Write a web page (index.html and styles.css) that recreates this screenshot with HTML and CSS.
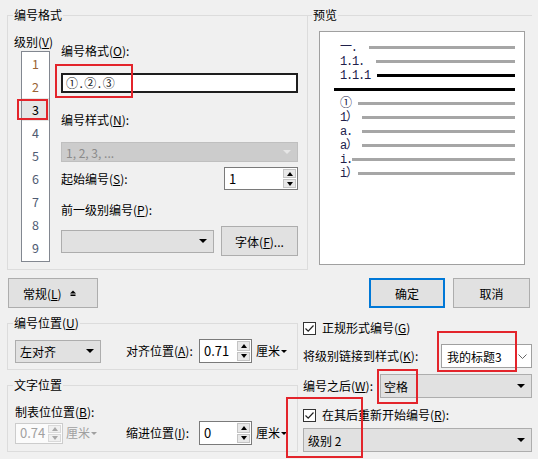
FILE: index.html
```html
<!DOCTYPE html>
<html>
<head>
<meta charset="utf-8">
<link rel="stylesheet" href="styles.css">
</head>
<body>
<div class="dlg">
  <div class="top">
    <div class="group g-fmt">
      <div class="gtitle">编号格式</div>
      <div class="fmt-body">
        <div class="levels">
          <div class="lbl l-lvl">级别(<u>V</u>)</div>
          <div class="lvlbox">
            <div class="lvl lv-a">1</div>
            <div class="lvl lv-a">2</div>
            <div class="lvl sel">3</div>
            <div class="lvl lv-b">4</div>
            <div class="lvl lv-b">5</div>
            <div class="lvl lv-b">6</div>
            <div class="lvl lv-b">7</div>
            <div class="lvl lv-b">8</div>
            <div class="lvl lv-b">9</div>
          </div>
        </div>
        <div class="fields">
          <div class="lbl l-fmt">编号格式(<u>O</u>):</div>
          <div class="fmtinput">①.②.③</div>
          <div class="lbl l-style">编号样式(<u>N</u>):</div>
          <div class="combo disabled c-style"><span>1, 2, 3, ...</span><i class="arr"></i></div>
          <div class="row r-start">
            <span class="lbl">起始编号(<u>S</u>):</span>
            <div class="spin s-start"><span class="val">1</span><div class="spinbtns"><b class="sb"><i class="up"></i></b><b class="sb"><i class="dn"></i></b></div></div>
          </div>
          <div class="lbl l-prev">前一级别编号(<u>P</u>):</div>
          <div class="row r-prev">
            <div class="combo c-prev"><span></span><i class="arr"></i></div>
            <div class="btn b-font">字体(<u>F</u>)...</div>
          </div>
        </div>
      </div>
    </div>
    <div class="group g-prev">
      <div class="gtitle">预览</div>
      <div class="pv">
        <div class="pr"><span class="pt w29">一.</span><span class="bar"></span></div>
        <div class="pr"><span class="pt w36">1.1.</span><span class="bar"></span></div>
        <div class="pr"><span class="pt w37">1.1.1</span><span class="bar blk"></span></div>
        <div class="pr full"><span class="bar blk"></span></div>
        <div class="pr"><span class="pt w18">①</span><span class="bar"></span></div>
        <div class="pr"><span class="pt w22">1）</span><span class="bar"></span></div>
        <div class="pr"><span class="pt w22">a.</span><span class="bar"></span></div>
        <div class="pr"><span class="pt w22">a）</span><span class="bar"></span></div>
        <div class="pr"><span class="pt w12">i.</span><span class="bar"></span></div>
        <div class="pr"><span class="pt w18">i）</span><span class="bar"></span></div>
      </div>
    </div>
  </div>

  <div class="btnrow">
    <div class="btn b-gen">常规(<u>L</u>)<svg class="ico" width="6" height="7" viewBox="0 0 6 7"><polygon points="0,3.5 3,0.5 6,3.5" fill="#000"/><rect x="0.5" y="4.5" width="5" height="1.5" fill="#000"/></svg></div>
    <div class="btn b-ok">确定</div>
    <div class="btn b-cancel">取消</div>
  </div>

  <div class="bottom">
    <div class="bl">
      <div class="group g-pos">
        <div class="gtitle">编号位置(<u>U</u>)</div>
        <div class="grow r-pos">
          <div class="lead"><div class="combo c-align"><span>左对齐</span><i class="arr"></i></div></div>
          <span class="lbl l-w">对齐位置(<u>A</u>):</span>
          <div class="spin s-small"><span class="val">0.71</span><div class="spinbtns"><b class="sb"><i class="up"></i></b><b class="sb"><i class="dn"></i></b></div></div>
          <span class="unit">厘米<i class="tri"></i></span>
        </div>
      </div>
      <div class="group g-text">
        <div class="gtitle">文字位置</div>
        <div class="lbl l-tab">制表位位置(<u>B</u>):</div>
        <div class="grow r-text">
          <div class="lead">
            <div class="spin s-dis"><span class="val">0.74</span><div class="spinbtns"><b class="sb"><i class="up"></i></b><b class="sb"><i class="dn"></i></b></div></div>
            <span class="unit dis">厘米<i class="tri"></i></span>
          </div>
          <span class="lbl l-w">缩进位置(<u>I</u>):</span>
          <div class="spin s-small"><span class="val">0</span><div class="spinbtns"><b class="sb"><i class="up"></i></b><b class="sb"><i class="dn"></i></b></div></div>
          <span class="unit">厘米<i class="tri"></i></span>
        </div>
      </div>
    </div>
    <div class="br">
      <div class="chkrow r-legal">
        <span class="chk"><svg width="11" height="11" viewBox="0 0 11 11"><polyline points="1.5,5.5 4.2,8.2 9.5,2.5" fill="none" stroke="#222" stroke-width="1.2"/></svg></span>
        <span class="lbl">正规形式编号(<u>G</u>)</span>
      </div>
      <div class="row r-link">
        <span class="lbl">将级别链接到样式(<u>K</u>):</span>
        <div class="combo c-link"><span>我的标题3</span><svg class="chev" width="9" height="5" viewBox="0 0 9 5"><polyline points="0.5,0.5 4.5,4.5 8.5,0.5" fill="none" stroke="#666" stroke-width="1"/></svg></div>
      </div>
      <div class="row r-after">
        <span class="lbl">编号之后(<u>W</u>):</span>
        <div class="combo c-after"><span>空格</span><i class="arr"></i></div>
      </div>
      <div class="chkrow r-restart">
        <span class="chk"><svg width="11" height="11" viewBox="0 0 11 11"><polyline points="1.5,5.5 4.2,8.2 9.5,2.5" fill="none" stroke="#222" stroke-width="1.2"/></svg></span>
        <span class="lbl">在其后重新开始编号(<u>R</u>):</span>
      </div>
      <div class="combo c-lvl"><span>级别 2</span><i class="arr"></i></div>
    </div>
  </div>

  <div class="mark m1"></div>
  <div class="mark m2"></div>
  <div class="mark m3"></div>
  <div class="mark m4"></div>
  <div class="mark m5"></div>
</div>
</body>
</html>
```

FILE: styles.css
```css
html, body {
  margin: 0;
  padding: 0;
  background: #f0f0f0;
}
body {
  font-family: "Noto Sans CJK SC", "Microsoft YaHei", sans-serif;
  font-size: 12px;
  color: #000;
}
u { text-underline-offset: 1px; }

.dlg {
  position: relative;
  width: 538px;
  height: 459px;
  overflow: hidden;
}

.lbl {
  line-height: 16px;
  white-space: nowrap;
}

/* group boxes */
.group {
  box-sizing: border-box;
  border: 1px solid #dcdcdc;
}
.gtitle {
  width: max-content;
  height: 16px;
  line-height: 16px;
  margin: -9px 0 0 5px;
  padding: 0 1px;
  background: #f0f0f0;
  white-space: nowrap;
}

.top {
  display: flex;
  padding: 15px 0 0 7px;
}
.g-fmt {
  width: 301px;
  height: 255px;
  flex: none;
}
.g-prev {
  width: 225px;
  height: 255px;
  margin-left: -1px;
  flex: none;
  border-width: 1px 0 0 0;
}

.fmt-body {
  display: flex;
}
.levels {
  flex: none;
  width: 36px;
  margin-left: 6px;
}
.l-lvl { margin-top: 11px; }
.lvlbox {
  box-sizing: border-box;
  width: 29px;
  height: 211px;
  margin: 1px 0 0 7px;
  border: 1px solid #828790;
  background: #fff;
}
.lvl {
  height: 23px;
  line-height: 23px;
  text-align: center;
  font-size: 12.5px;
}
.lv-a { color: #9a6436; }
.lv-b { color: #4e5a72; }
.lvl.sel {
  background: #e5e5e5;
  color: #000;
}

.fields {
  flex: none;
  width: 237px;
  margin-left: 11px;
}
.l-fmt { margin-top: 20px; }
.fmtinput {
  box-sizing: border-box;
  height: 20px;
  margin-top: 14px;
  border: 2px solid #1e1e1e;
  background: #fff;
  padding-left: 3px;
  line-height: 16px;
  letter-spacing: 1.5px;
  color: #1a1a1a;
}
.l-style { margin-top: 19px; }

.combo {
  box-sizing: border-box;
  display: flex;
  align-items: center;
  border: 1px solid #adadad;
  background: #e1e1e1;
  padding-left: 4px;
  white-space: nowrap;
}
.combo .arr {
  margin-left: auto;
  margin-right: 6px;
  width: 0;
  height: 0;
  border-left: 4px solid transparent;
  border-right: 4px solid transparent;
  border-top: 4px solid #000;
}
.combo.disabled {
  background: #cccccc;
  border-color: #bfbfbf;
  color: #8a8a8a;
}
.combo.disabled .arr { border-top-color: #e6e6e6; }
.c-style {
  height: 20px;
  margin-top: 14px;
}

.row {
  display: flex;
  align-items: center;
  justify-content: space-between;
}
.r-start {
  height: 23px;
  margin-top: 5px;
}
.l-prev { margin-top: 12px; }
.r-prev {
  height: 30px;
  margin-top: 8px;
  justify-content: flex-start;
}
.c-prev {
  width: 153px;
  height: 23px;
}

.btn {
  box-sizing: border-box;
  display: flex;
  align-items: center;
  justify-content: center;
  border: 1px solid #adadad;
  background: #e1e1e1;
  white-space: nowrap;
}
.b-font {
  width: 77px;
  height: 30px;
  margin-left: 7px;
}

/* spinner */
.spin {
  box-sizing: border-box;
  display: flex;
  align-items: stretch;
  border: 1px solid #7a7a7a;
  background: #fff;
}
.spin .val {
  flex: 1;
  align-self: center;
  padding-left: 4px;
  line-height: 16px;
  font-size: 13px;
}
.spinbtns {
  width: 13px;
  margin: 1px;
  display: flex;
  flex-direction: column;
  gap: 1px;
}
.sb {
  flex: 1;
  box-sizing: border-box;
  border: 1px solid #c4c4c4;
  background: #e8e8e8;
  display: flex;
  align-items: center;
  justify-content: center;
}
.sb i {
  width: 0;
  height: 0;
  border-left: 3px solid transparent;
  border-right: 3px solid transparent;
}
.sb .up { border-bottom: 4px solid #000; }
.sb .dn { border-top: 4px solid #000; }
.s-start {
  width: 74px;
  height: 23px;
}
.s-small {
  width: 53px;
  height: 24px;
}
.s-dis {
  width: 48px;
  height: 21px;
  border-color: #cccccc;
  background: #fbfbfb;
}
.s-dis .val { color: #a0a0a0; }
.s-dis .sb { border-color: #d9d9d9; background: #f0f0f0; }
.s-dis .sb .up { border-bottom-color: #a8a8a8; }
.s-dis .sb .dn { border-top-color: #a8a8a8; }

.unit {
  display: inline-flex;
  align-items: center;
  margin-left: 4px;
  line-height: 16px;
  white-space: nowrap;
}
.unit .tri {
  margin-left: 1px;
  margin-top: 1px;
  width: 0;
  height: 0;
  border-left: 3px solid transparent;
  border-right: 3px solid transparent;
  border-top: 3px solid #000;
}
.unit.dis { color: #a0a0a0; margin-left: 3px; }
.unit.dis .tri { border-top-color: #a0a0a0; }

/* preview */
.pv {
  box-sizing: border-box;
  width: 206px;
  height: 234px;
  margin: 8px 0 0 12px;
  border: 1px solid #a0a0a0;
  background: #fff;
  padding-top: 9px;
}
.pr {
  display: flex;
  align-items: flex-start;
  height: 14px;
  margin: 0 9px 0 20px;
}
.pr.full { margin-left: 14px; }
.pt {
  flex: none;
  line-height: 14px;
  font-family: "Liberation Mono", "Noto Sans CJK SC", monospace;
  font-size: 12px;
  letter-spacing: -1.2px;
  color: #20204a;
  white-space: nowrap;
}
.w12 { width: 12px; }
.w18 { width: 18px; }
.w22 { width: 22px; }
.w29 { width: 29px; }
.w36 { width: 36px; }
.w37 { width: 37px; }
.bar {
  flex: 1;
  height: 3px;
  margin-top: 5px;
  background: #a6a6a6;
}
.bar.blk { background: #000; }

/* buttons row */
.btnrow {
  display: flex;
  margin-top: 8px;
  padding: 0 8px;
}
.b-gen {
  width: 90px;
  height: 30px;
  justify-content: flex-start;
  padding-left: 14px;
}
.b-gen .ico { margin-left: 8px; }
.b-ok {
  width: 76px;
  height: 30px;
  margin-left: auto;
  border: 2px solid #0078d7;
}
.b-cancel {
  width: 77px;
  height: 30px;
  margin-left: 8px;
}

/* bottom */
.bottom {
  display: flex;
  padding-left: 7px;
}
.bl {
  flex: none;
  width: 291px;
}
.br {
  flex: none;
  width: 229px;
  margin-left: 5px;
}
.g-pos {
  height: 47px;
  margin-top: 15px;
}
.g-text {
  height: 67px;
  margin-top: 15px;
}
.grow {
  display: flex;
  align-items: center;
  height: 24px;
  padding-left: 7px;
}
.r-pos { margin-top: 8px; }
.lead {
  flex: none;
  width: 111px;
  display: flex;
  align-items: center;
}
.c-align {
  width: 86px;
  height: 23px;
}
.l-w {
  flex: none;
  width: 73px;
}
.l-tab {
  margin-top: 11px;
  padding-left: 7px;
}
.r-text { margin-top: 1px; }

.chkrow {
  display: flex;
  align-items: center;
  height: 16px;
}
.chk {
  box-sizing: border-box;
  width: 13px;
  height: 13px;
  border: 1px solid #333;
  background: #fff;
  display: flex;
  align-items: center;
  justify-content: center;
}
.chk svg { display: block; }
.chkrow .lbl { margin-left: 6px; }
.r-legal { margin-top: 12px; }
.r-link {
  height: 24px;
  margin-top: 8px;
}
.c-link {
  width: 91px;
  height: 24px;
  background: #fff;
  border-color: #a0a0a0;
  padding-left: 5px;
}
.c-link .chev {
  margin-left: auto;
  margin-right: 4px;
}
.r-after {
  height: 24px;
  margin-top: 6px;
}
.c-after {
  width: 152px;
  height: 24px;
  padding-left: 3px;
}
.r-restart { margin-top: 9px; }
.c-lvl {
  width: 229px;
  height: 24px;
  margin-top: 5px;
}

/* red annotation boxes */
.mark {
  position: absolute;
  box-sizing: border-box;
  border: 2px solid #e3242b;
}
.m1 { left: 17px; top: 99px; width: 31px; height: 21px; }
.m2 { left: 55px; top: 64px; width: 78px; height: 34px; }
.m3 { left: 437px; top: 331px; width: 80px; height: 41px; }
.m4 { left: 377px; top: 369px; width: 41px; height: 35px; }
.m5 { left: 286px; top: 397px; width: 77px; height: 61px; }
```
